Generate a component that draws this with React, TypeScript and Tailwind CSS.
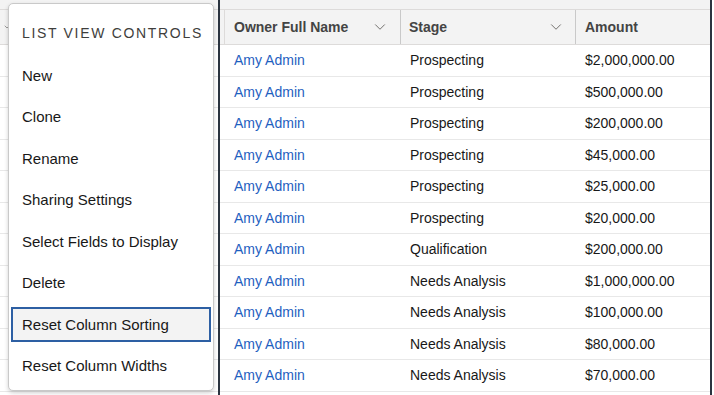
import { ChevronDown } from "lucide-react";

const rows = [
  { stage: "Prospecting", amount: "$2,000,000.00" },
  { stage: "Prospecting", amount: "$500,000.00" },
  { stage: "Prospecting", amount: "$200,000.00" },
  { stage: "Prospecting", amount: "$45,000.00" },
  { stage: "Prospecting", amount: "$25,000.00" },
  { stage: "Prospecting", amount: "$20,000.00" },
  { stage: "Qualification", amount: "$200,000.00" },
  { stage: "Needs Analysis", amount: "$1,000,000.00" },
  { stage: "Needs Analysis", amount: "$100,000.00" },
  { stage: "Needs Analysis", amount: "$80,000.00" },
  { stage: "Needs Analysis", amount: "$70,000.00" },
];

const menuItems = [
  "New",
  "Clone",
  "Rename",
  "Sharing Settings",
  "Select Fields to Display",
  "Delete",
  "Reset Column Sorting",
  "Reset Column Widths",
];

function ListViewMenu() {
  return (
    <div className="absolute left-[8px] top-[3px] w-[206px] h-[388px] rounded-[5px] border border-[#c9c9c9] bg-white shadow-[0_2px_4px_rgba(0,0,0,0.18)] z-10">
      <div className="h-[51px] pl-[13px] pt-[19px] text-[14px] tracking-[0.12em] text-[#3e3e3c] uppercase">
        List View Controls
      </div>
      <ul className="flex flex-col">
        {menuItems.map((label) => {
          const active = label === "Reset Column Sorting";
          return (
            <li key={label} className="h-[41.5px] px-[2px] flex items-center">
              <div
                className={
                  active
                    ? "w-full h-[35px] flex items-center pl-[9px] bg-[#f3f3f3] border-2 border-[#2d5fa3] text-[15px] text-[#181818]"
                    : "w-full h-[35px] flex items-center pl-[11px] text-[15px] text-[#181818]"
                }
              >
                {label}
              </div>
            </li>
          );
        })}
      </ul>
    </div>
  );
}

export default function App() {
  return (
    <div
      className="relative w-[714px] h-[395px] overflow-hidden bg-white"
      style={{ fontFamily: '"Liberation Sans", Arial, sans-serif' }}
    >
      <div className="flex h-full">
        {/* table columns hidden behind the menu */}
        <div className="w-[218px] shrink-0 flex flex-col">
          <div className="h-[10px] bg-[#f3f3f3] border-b border-[#dddbda]" />
          <div className="h-[35px] bg-[#f3f3f3] border-b border-[#dddbda] flex items-center pl-[3px]">
            <ChevronDown className="w-[8px] h-[8px] text-[#706e6b]" strokeWidth={2} />
          </div>
          {rows.map((_, i) => (
            <div key={i} className="h-[31.5px] border-b border-[#e8e8e8]" />
          ))}
        </div>

        {/* visible table */}
        <div className="flex-1 flex flex-col border-l-2 border-r-2 border-[#2b3440] mr-[2px]">
          <div className="h-[10px] bg-[#f3f3f3] border-b border-[#dddbda]" />
          <div className="h-[35px] shrink-0 bg-[#f3f3f3] border-b border-[#dddbda] flex text-[14px] font-bold text-[#444444]">
            <div className="w-[5px] border-r border-[#dddbda]" />
            <div className="w-[176px] flex items-center justify-between pl-[9px] pr-[11px] border-r border-[#c9c9c9]">
              <span>Owner Full Name</span>
              <ChevronDown className="w-[18px] h-[18px] text-[#706e6b]" strokeWidth={1.3} />
            </div>
            <div className="w-[175px] flex items-center justify-between pl-[8px] pr-[10px] border-r border-[#c9c9c9]">
              <span>Stage</span>
              <ChevronDown className="w-[18px] h-[18px] text-[#706e6b]" strokeWidth={1.3} />
            </div>
            <div className="flex-1 flex items-center pl-[9px]">
              <span>Amount</span>
            </div>
          </div>
          {rows.map((r, i) => (
            <div
              key={i}
              className="h-[31.5px] shrink-0 flex items-center border-b border-[#e8e8e8] text-[14px] text-[#181818] pt-[1px]"
            >
              <div className="w-[5px]" />
              <div className="w-[176px] pl-[9px] text-[#1f5fbf]">Amy Admin</div>
              <div className="w-[175px] pl-[9px]">{r.stage}</div>
              <div className="flex-1 pl-[9px]">{r.amount}</div>
            </div>
          ))}
        </div>
      </div>
      <ListViewMenu />
    </div>
  );
}
